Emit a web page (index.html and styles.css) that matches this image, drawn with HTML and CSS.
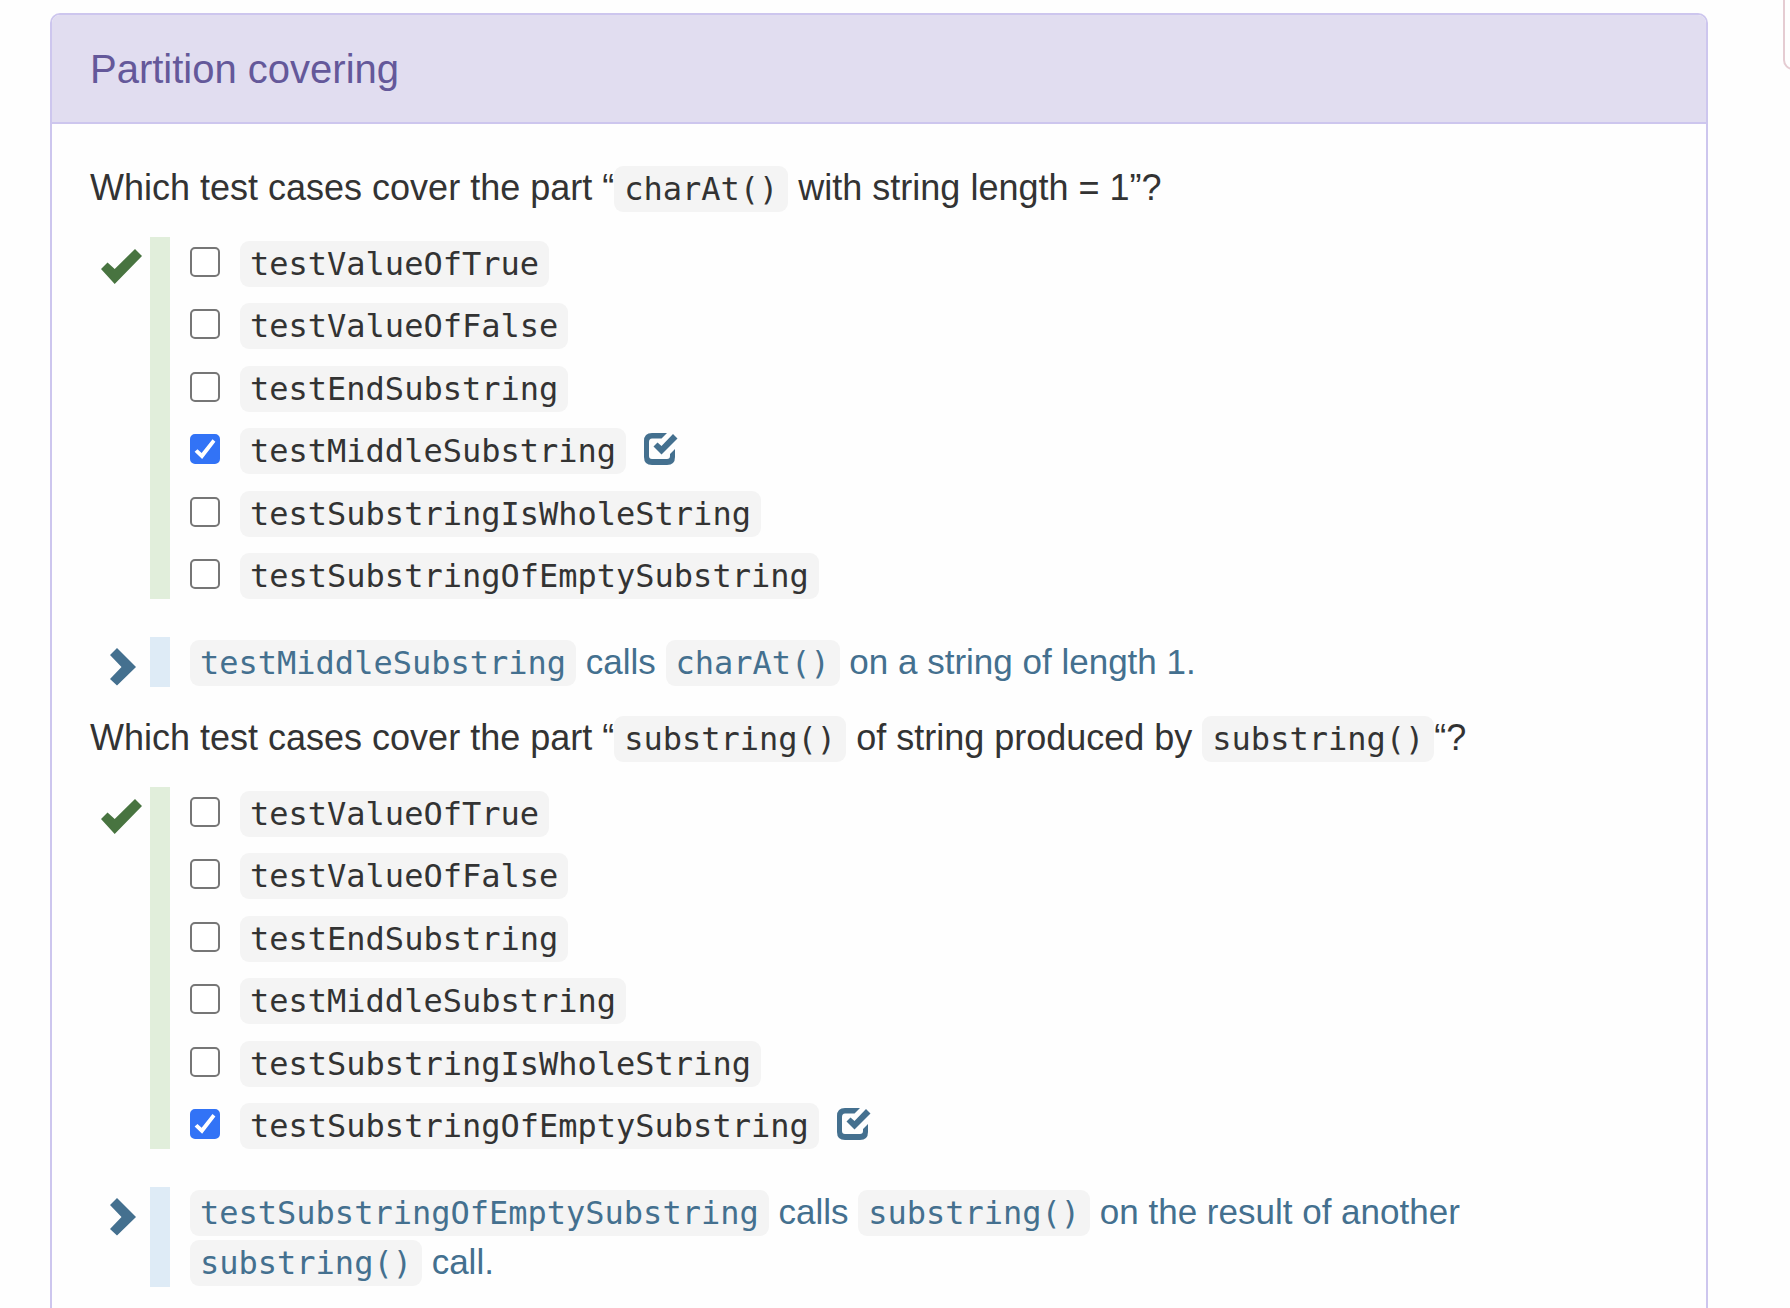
FILE: index.html
```html
<!DOCTYPE html>
<html lang="en">
<head>
<meta charset="utf-8">
<title>Partition covering</title>
<link rel="stylesheet" href="styles.css">
</head>
<body>
<svg class="sprite">
  <symbol id="ok" viewBox="0 0 42 35"><path d="M1 20 7.500 13.500 14.700 20 35 0 42 7 14.700 35Z"/></symbol>
  <symbol id="chevron" viewBox="0 0 26 38"><path d="M7 0 26 19 7 37.500 0 31 11.500 19 0 7Z"/></symbol>
  <symbol id="answer" viewBox="0 0 36 34"><path d="M24 1H9Q1 1 1 9V25Q1 33 9 33H24Q32 33 32 25V17L27 22V24Q27 27 24 27H9Q6 27 6 24V10Q6 6.500 9 6.500H18.500Z"/><path d="M10.500 14.500 14.500 10.500 18.500 14 30 2 34.500 6.500 18.500 22.500Z"/></symbol>
</svg>
<div class="page">
  <main class="panel">
    <header class="panel-heading"><h1>Partition covering</h1></header>
    <div class="panel-body">
      <p class="question">Which test cases cover the part “<code>charAt()</code> with string length = 1”?</p>
      <div class="row">
        <svg class="icon-ok"><use href="#ok"/></svg>
        <ul class="choices">
          <li><label><input type="checkbox"><code>testValueOfTrue</code></label></li>
          <li><label><input type="checkbox"><code>testValueOfFalse</code></label></li>
          <li><label><input type="checkbox"><code>testEndSubstring</code></label></li>
          <li><label><input type="checkbox" checked><code>testMiddleSubstring</code></label><svg class="icon-answer"><use href="#answer"/></svg></li>
          <li><label><input type="checkbox"><code>testSubstringIsWholeString</code></label></li>
          <li><label><input type="checkbox"><code>testSubstringOfEmptySubstring</code></label></li>
        </ul>
      </div>
      <div class="row">
        <svg class="icon-chevron"><use href="#chevron"/></svg>
        <p class="explanation"><code>testMiddleSubstring</code> calls <code>charAt()</code> on a string of length 1.</p>
      </div>
      <p class="question">Which test cases cover the part “<code>substring()</code> of string produced by <code>substring()</code>“?</p>
      <div class="row">
        <svg class="icon-ok"><use href="#ok"/></svg>
        <ul class="choices">
          <li><label><input type="checkbox"><code>testValueOfTrue</code></label></li>
          <li><label><input type="checkbox"><code>testValueOfFalse</code></label></li>
          <li><label><input type="checkbox"><code>testEndSubstring</code></label></li>
          <li><label><input type="checkbox"><code>testMiddleSubstring</code></label></li>
          <li><label><input type="checkbox"><code>testSubstringIsWholeString</code></label></li>
          <li><label><input type="checkbox" checked><code>testSubstringOfEmptySubstring</code></label><svg class="icon-answer"><use href="#answer"/></svg></li>
        </ul>
      </div>
      <div class="row">
        <svg class="icon-chevron"><use href="#chevron"/></svg>
        <p class="explanation"><code>testSubstringOfEmptySubstring</code> calls <code>substring()</code> on the result of another <code>substring()</code> call.</p>
      </div>
    </div>
  </main>
  <aside class="side-note"></aside>
</div>
</body>
</html>
```
FILE: styles.css
```css
* {
  box-sizing: border-box;
}

html {
  overflow: hidden;
}

body {
  margin: 0;
  background: #fefefe;
  color: #333;
  font: 35px/50px "Liberation Sans", Arial, sans-serif;
}

h1,
p,
ul {
  margin: 0;
  padding: 0;
}

.sprite {
  display: none;
}

.page {
  display: grid;
  grid-template-columns: 1fr 7px;
  gap: 75px;
  align-items: start;
  padding-left: 50px;
}

.panel {
  margin-top: 13px;
  border: 2px solid #cdc6ee;
  border-radius: 10px;
  background: #fefefe;
  overflow: hidden;
}

.panel-heading {
  padding: 30px 38px 29px;
  border-bottom: 2px solid #cdc6ee;
  background: #e1ddf0;
}

h1 {
  color: #64589a;
  font-size: 40px;
  font-weight: 400;
  line-height: 48px;
}

.panel-body {
  padding: 38px;
}

.question {
  padding-top: 1px;
  margin-bottom: 24px;
  font-size: 36px;
}

code {
  padding: 4px 10px;
  border-radius: 9px;
  background: #f4f4f4;
  font: 32px "DejaVu Sans Mono", monospace;
}

.row {
  display: grid;
  grid-template-columns: 60px 1fr;
  align-items: start;
}

.choices {
  display: grid;
  align-content: space-between;
  min-height: 362px;
  margin-bottom: 38px;
  padding-left: 20px;
  border-left: 20px solid #e1eedb;
  list-style: none;
}

li {
  display: flex;
  align-items: center;
  gap: 17px;
  height: 50px;
}

label {
  display: flex;
  align-items: center;
}

label code {
  margin-top: 4px;
}

input {
  appearance: none;
  width: 30px;
  height: 30px;
  margin: 0 20px 0 0;
  border: 2px solid #767676;
  border-radius: 5px;
  background: #fff;
}

input:checked {
  border-color: #3273f6;
  background: #3273f6;
}

input:checked::before {
  content: "";
  display: block;
  height: 100%;
  background: #fff;
  clip-path: polygon(10% 60%, 21% 50%, 37% 65%, 79% 12%, 90% 21%, 39% 88%);
}

.explanation {
  margin-bottom: 25px;
  padding-left: 20px;
  border-left: 20px solid #deebf6;
  color: #44708f;
}

svg {
  fill: #44708f;
}

.icon-ok {
  width: 42px;
  height: 35px;
  margin: 12px 0 0 10px;
  fill: #487440;
}

.icon-chevron {
  width: 26px;
  height: 38px;
  margin: 11px 0 0 20px;
}

.icon-answer {
  width: 36px;
  height: 34px;
}

.side-note {
  width: 60px;
  height: 70px;
  border: 2px solid #e5ccd2;
  border-top: 0;
  border-radius: 0 0 10px 10px;
}
```
